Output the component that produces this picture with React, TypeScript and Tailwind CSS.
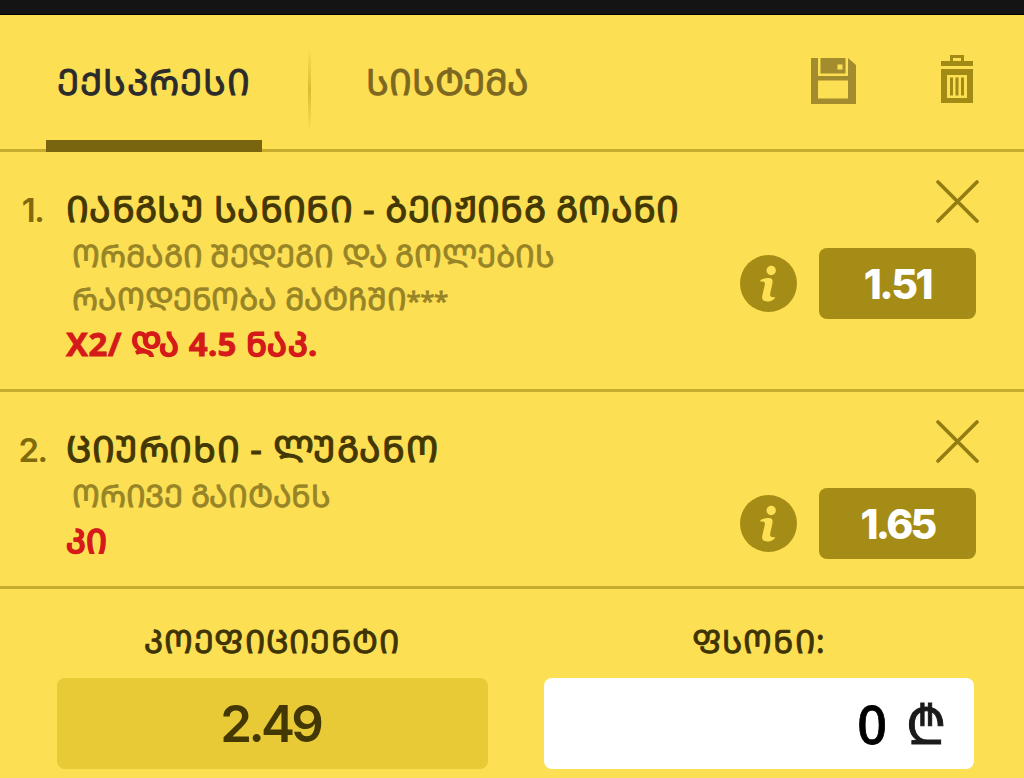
const bets = [
  {
    title: "ᲘᲐᲜᲒᲡᲣ ᲡᲐᲜᲘᲜᲘ - ᲑᲔᲘᲟᲘᲜᲒ ᲒᲝᲐᲜᲘ",
    titleClass: "tracking-[0.37px]",
    market: ["ᲝᲠᲛᲐᲒᲘ ᲨᲔᲓᲔᲒᲘ ᲓᲐ ᲒᲝᲚᲔᲑᲘᲡ", "ᲠᲐᲝᲓᲔᲜᲝᲑᲐ ᲛᲐᲢᲩᲨᲘ"],
    marketClass: "tracking-[-0.1px]",
    note: "***",
    pick: "X2/ ᲓᲐ 4.5 ᲜᲐᲙ.",
    odd: "1.51",
    oddClass: "tracking-[-2.4px]",
  },
  {
    title: "ᲪᲘᲣᲠᲘᲮᲘ - ᲚᲣᲒᲐᲜᲝ",
    titleClass: "tracking-[0.62px]",
    market: ["ᲝᲠᲘᲕᲔ ᲒᲐᲘᲢᲐᲜᲡ"],
    marketClass: "tracking-[-0.25px]",
    note: "",
    pick: "ᲙᲘ",
    odd: "1.65",
    oddClass: "tracking-[-2.8px]",
  },
];

function SaveIcon() {
  return (
    <svg width="45" height="46" viewBox="0 0 45 46" fill="#a38c2e">
      <path d="M0 0h7v23h30V0l8 7v39H0zM7 23v17.500h30V23z" fillRule="evenodd" />
      <path d="M9.500 0h25v15.500h-25zM26.500 6.500v5h5v-5z" fillRule="evenodd" />
      <path d="M7 18h30v4.500H7z" />
    </svg>
  );
}

function TrashIcon() {
  return (
    <svg width="32" height="48" viewBox="0 0 32 48" fill="#a28b14">
      <path d="M9 0h14v6h9v5H0V6h9zM12 3v3h8V3z" fillRule="evenodd" />
      <path d="M0 14h32v34H0zM6 20v23h20V20z" fillRule="evenodd" />
      <path d="M9 22.500h3v18H9zM14.500 22.500h3v18h-3zM20 22.500h3v18h-3z" />
    </svg>
  );
}

function InfoIcon() {
  return (
    <svg width="57" height="57" viewBox="0 0 57 57">
      <circle cx="28.500" cy="28.500" r="28.500" fill="#a58c16" />
      <circle cx="31.200" cy="15.500" r="4.700" fill="#fddf54" />
      <path
        d="M20.300 25.300C23 23.500 26 23 29 23c3 0 4 2 3.500 5l-2.300 10.500c-.6 3 .8 4.200 5 3.500-.3 2.700-4 4.500-8 4.500-4.500 0-5.700-2.500-4.900-6l2.500-10.800c.5-2.700-.8-3.600-4-3z"
        fill="#fddf54"
      />
    </svg>
  );
}

function CloseIcon() {
  return (
    <svg width="43" height="43" viewBox="0 0 43 43" stroke="#937c12" strokeWidth="3.600" strokeLinecap="round">
      <path d="M2 2l39 39M41 2L2 41" />
    </svg>
  );
}

export default function App() {
  return (
    <div className="flex h-[778px] w-[1024px] flex-col overflow-hidden bg-[#fddf54] font-['Noto_Sans','DejaVu_Sans',sans-serif] whitespace-nowrap">
      <div className="h-[15px] border-b border-black bg-[#141414]" />

      {/* Tabs */}
      <header className="flex h-[137px] border-b-[3px] border-[#c6ab2d] pr-[51px] pl-[46px]">
        <button className="-mb-[3px] flex h-[137px] w-[216px] items-center justify-center border-b-[12px] border-[#79640f] pt-[8px] text-[36px] tracking-[0.8px] text-[#2b2b2b] [-webkit-text-stroke:0.9px]">
          ᲔᲥᲡᲞᲠᲔᲡᲘ
        </button>
        <div className="mt-[33px] ml-[46px] h-[84px] w-[3px] bg-linear-to-b from-transparent via-[#dbbd2c] to-transparent" />
        <button className="ml-[55px] h-[134px] w-[162px] text-left text-[36px] tracking-[-0.15px] text-[#7c6820] [-webkit-text-stroke:0.9px]">
          ᲡᲘᲡᲢᲔᲛᲐ
        </button>
        <div className="ml-auto flex items-start gap-[85px] pt-10">
          <div className="pt-[3px]">
            <SaveIcon />
          </div>
          <TrashIcon />
        </div>
      </header>

      {/* Bets */}
      {bets.map((bet, idx) => (
        <section key={idx} className="flex border-b-[3px] border-[#c6ab2d] pr-12 pb-[22px]">
          <div className="w-[65px] pt-[33px] text-center font-['Inter'] text-[33px] leading-[50px] font-semibold tracking-[-1.5px] text-[#806a0c]">
            {idx + 1}.
          </div>
          <div className="flex-1 pt-8 pl-px">
            <h2 className={`text-[36px] leading-[50px] text-[#433804] [-webkit-text-stroke:1.1px] ${bet.titleClass}`}>
              {bet.title}
            </h2>
            {bet.market.map((line, i) => (
              <p
                key={line}
                className={`h-[43px] pl-[6px] text-[31px] leading-[43px] text-[#978427] [-webkit-text-stroke:0.8px] ${bet.marketClass}`}
              >
                {line}
                {i === bet.market.length - 1 && <span className="text-[26px] tracking-[-0.600px]">{bet.note}</span>}
              </p>
            ))}
            <p className="text-[33px] leading-[47px] font-bold tracking-[0.4px] text-[#d51a1a] [-webkit-text-stroke:0.8px]">
              {bet.pick}
            </p>
          </div>
          <div className="flex flex-col items-end gap-[25px] pt-7">
            <button className="-mr-[3px]">
              <CloseIcon />
            </button>
            <div className="flex items-center gap-[22px]">
              <div className="pb-px">
                <InfoIcon />
              </div>
              <button
                className={`h-[71px] w-[157px] rounded-lg bg-[#a58c16] pt-[2px] font-['Inter'] text-[41px] font-extrabold text-white ${bet.oddClass}`}
              >
                {bet.odd}
              </button>
            </div>
          </div>
        </section>
      ))}

      {/* Totals */}
      <footer className="grid grid-cols-2 gap-[56px] pt-[27px] pr-[50px] pl-[57px] text-center">
        <div>
          <div className="mb-3 text-[32px] leading-[50px] tracking-[1.1px] text-[#3d3305] [-webkit-text-stroke:0.9px]">
            ᲙᲝᲔᲤᲘᲪᲘᲔᲜᲢᲘ
          </div>
          <div className="flex h-[91px] items-center justify-center rounded-lg bg-[#e7ca35] pt-[2px] pr-1 font-['Inter'] text-[51px] font-semibold tracking-[-3.700px] text-[#433804]">
            2.49
          </div>
        </div>
        <div>
          <div className="mb-3 text-[32px] leading-[50px] tracking-[1.3px] text-[#3d3305] [-webkit-text-stroke:0.9px]">
            ᲤᲡᲝᲜᲘ:
          </div>
          <div className="flex h-[91px] items-center justify-end gap-[19px] rounded-lg bg-white pr-[28px] text-[52px] text-black">
            <span className="font-medium [-webkit-text-stroke:0.8px]">0</span>
            <span className="text-[#1b1b1b] [-webkit-text-stroke:1px]">₾</span>
          </div>
        </div>
      </footer>
    </div>
  );
}
